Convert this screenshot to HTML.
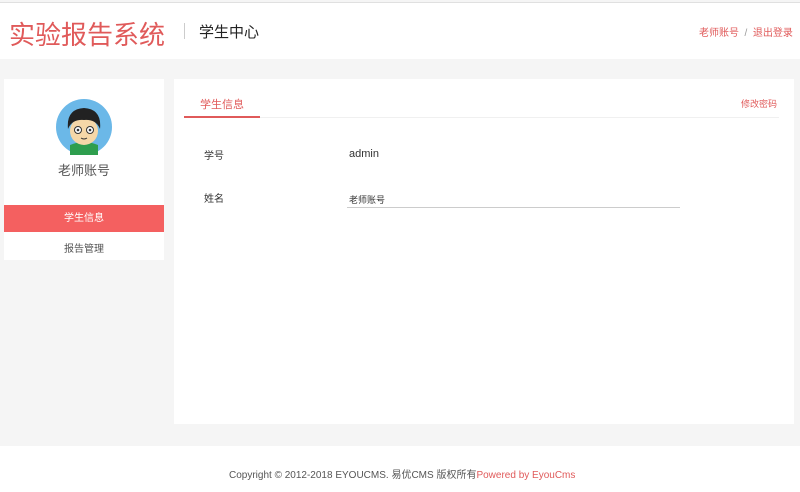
<!DOCTYPE html>
<html><head><meta charset="utf-8"><style>
body{margin:0;width:800px;height:492px;background:#f5f5f5;font-family:"Liberation Sans","Noto Sans CJK SC",sans-serif;position:relative;overflow:hidden}
.hdr{position:absolute;left:0;top:2px;width:800px;height:56px;background:#fff;border-top:1px solid #e0e0e0}
.abs{position:absolute;white-space:nowrap}
.foot{position:absolute;left:0;top:446px;width:800px;height:46px;background:#fff}
</style></head><body>
<div class="hdr"></div>
<div class="abs" style="left:9px;top:15px;font-size:26px;color:#e05a5a">实验报告系统</div>
<div class="abs" style="left:184px;top:23px;width:1px;height:16px;background:#ccc"></div>
<div class="abs" style="left:199px;top:21px;font-size:15px;color:#222">学生中心</div>
<div class="abs" style="left:699px;top:24px;font-size:10px;color:#e05a5a">老师账号 <span style="color:#999">&nbsp;/&nbsp;</span> 退出登录</div>

<div class="abs" style="left:4px;top:79px;width:160px;height:181px;background:#fff"></div>
<svg class="abs" style="left:56px;top:99px" width="56" height="56" viewBox="0 0 56 56">
<circle cx="28" cy="28" r="28" fill="#6bb8e8"/>
<path d="M14 46 Q28 40 42 46 L42 56 L14 56Z" fill="#2e9e4e"/>
<ellipse cx="28" cy="32" rx="14" ry="14" fill="#f5d7a8"/>
<path d="M12 30 Q10 10 28 9 Q46 10 44 30 Q40 20 28 21 Q16 20 12 30Z" fill="#222"/>
<circle cx="22" cy="31" r="3.5" fill="#fff" stroke="#333"/><circle cx="34" cy="31" r="3.5" fill="#fff" stroke="#333"/>
<circle cx="22" cy="31" r="1.3" fill="#333"/><circle cx="34" cy="31" r="1.3" fill="#333"/>
<path d="M25 39 Q28 41 31 39" stroke="#333" fill="none"/>
</svg>
<div class="abs" style="left:4px;top:160px;width:160px;text-align:center;font-size:13px;color:#555">老师账号</div>
<div class="abs" style="left:4px;top:205px;width:160px;height:27px;background:#f46060;color:#fff;font-size:10px;text-align:center;line-height:27px">学生信息</div>
<div class="abs" style="left:4px;top:240px;width:160px;text-align:center;font-size:10px;color:#555">报告管理</div>

<div class="abs" style="left:174px;top:79px;width:620px;height:345px;background:#fff"></div>
<div class="abs" style="left:184px;top:117px;width:595px;height:1px;background:#f0f0f0"></div>
<div class="abs" style="left:184px;top:116px;width:76px;height:2px;background:#e05a5a"></div>
<div class="abs" style="left:200px;top:96px;font-size:11px;color:#e05a5a">学生信息</div>
<div class="abs" style="left:741px;top:97px;font-size:9px;color:#e05a5a">修改密码</div>
<div class="abs" style="left:204px;top:147px;font-size:10px;color:#333">学号</div>
<div class="abs" style="left:349px;top:148px;font-size:11px;color:#333">admin</div>
<div class="abs" style="left:204px;top:190px;font-size:10px;color:#333">姓名</div>
<div class="abs" style="left:349px;top:193px;font-size:9px;color:#333">老师账号</div>
<div class="abs" style="left:347px;top:207px;width:333px;height:1px;background:#ccc"></div>

<div class="foot"></div>
<div class="abs" style="left:229px;top:466px;font-size:10px;color:#555">Copyright © 2012-2018 EYOUCMS. 易优CMS 版权所有<span style="color:#e05a5a">Powered by EyouCms</span></div>
</body></html>
